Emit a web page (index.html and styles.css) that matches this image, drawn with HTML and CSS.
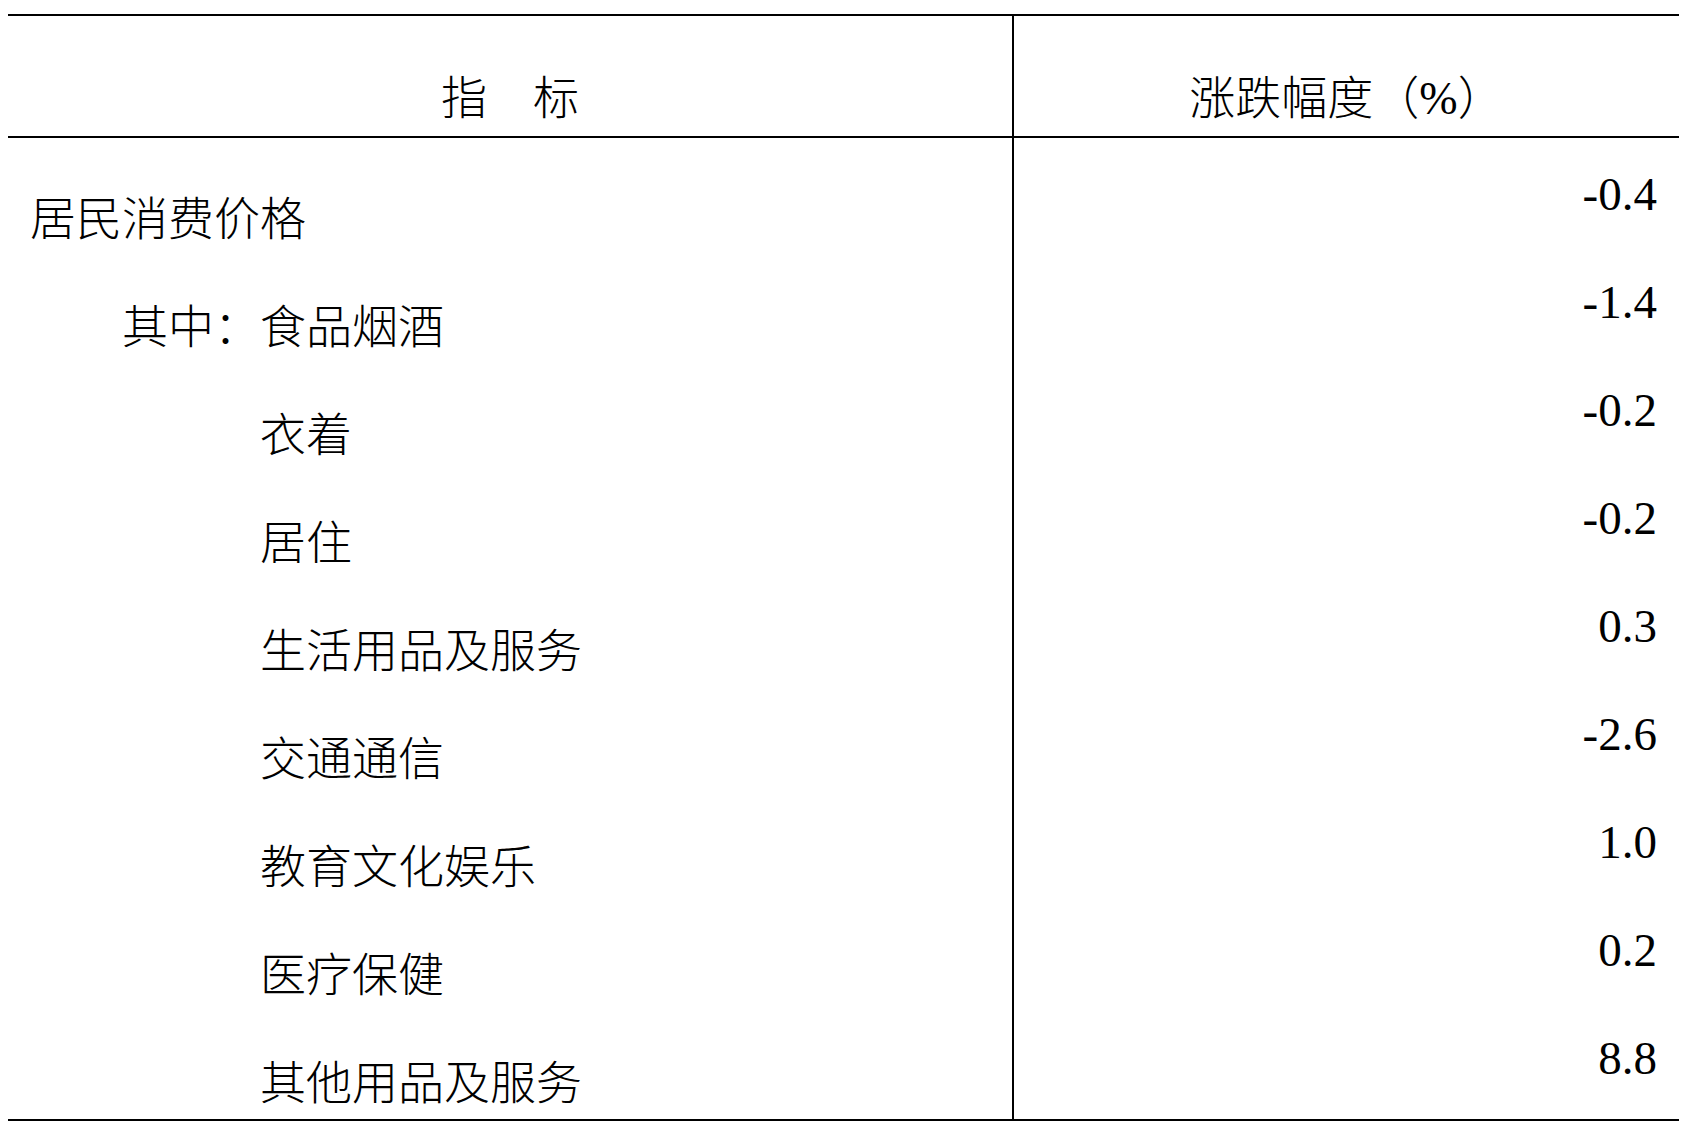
FILE: index.html
```html
<!DOCTYPE html>
<html lang="zh-CN">
<head>
<meta charset="utf-8">
<title>居民消费价格</title>
<link rel="stylesheet" href="styles.css">
</head>
<body>
<div class="tbl">
  <div class="row head">
    <div class="cell name">指　标</div>
    <div class="cell val">涨跌幅度（%）</div>
  </div>
  <div class="body">
    <div class="row first">
      <div class="cell name lv0">居民消费价格</div>
      <div class="cell val">-0.4</div>
    </div>
    <div class="row">
      <div class="cell name lv1">其中：食品烟酒</div>
      <div class="cell val">-1.4</div>
    </div>
    <div class="row">
      <div class="cell name lv2">衣着</div>
      <div class="cell val">-0.2</div>
    </div>
    <div class="row">
      <div class="cell name lv2">居住</div>
      <div class="cell val">-0.2</div>
    </div>
    <div class="row">
      <div class="cell name lv2">生活用品及服务</div>
      <div class="cell val">0.3</div>
    </div>
    <div class="row">
      <div class="cell name lv2">交通通信</div>
      <div class="cell val">-2.6</div>
    </div>
    <div class="row">
      <div class="cell name lv2">教育文化娱乐</div>
      <div class="cell val">1.0</div>
    </div>
    <div class="row">
      <div class="cell name lv2">医疗保健</div>
      <div class="cell val">0.2</div>
    </div>
    <div class="row last">
      <div class="cell name lv2">其他用品及服务</div>
      <div class="cell val">8.8</div>
    </div>
  </div>
</div>
</body>
</html>
```
FILE: styles.css
```css
html, body {
  margin: 0;
  padding: 0;
  background: #fff;
}
body {
  font-family: "Liberation Serif", "Noto Sans CJK SC", serif;
  color: #000;
}
.tbl {
  margin: 14px 0 0 8px;
  width: 1671px;
  border-top: 2px solid #000;
  border-bottom: 2px solid #000;
}
.row {
  display: grid;
  grid-template-columns: 1006px 1fr;
  height: 108px;
}
.cell {
  box-sizing: border-box;
}
.cell.name {
  border-right: 2px solid #000;
  font-size: 46px;
  line-height: 46px;
  padding-top: 51px;
  font-weight: 300;
  white-space: nowrap;
}
.cell.val {
  font-size: 47px;
  line-height: 46px;
  padding-top: 25px;
  padding-right: 22px;
  text-align: right;
}
.row.head {
  height: 122px;
  border-bottom: 2px solid #000;
  box-sizing: border-box;
}
.row.head .cell {
  text-align: center;
  font-size: 46px;
  font-weight: 300;
  line-height: 46px;
  padding: 60px 0 0 0;
}
.row.first {
  height: 116px;
}
.row.first .cell.name {
  padding-top: 59px;
}
.row.first .cell.val {
  padding-top: 33px;
}
.row.last {
  height: 109px;
}
.lv0 { padding-left: 22px; }
.lv1 { padding-left: 114px; }
.lv2 { padding-left: 252px; }
```
